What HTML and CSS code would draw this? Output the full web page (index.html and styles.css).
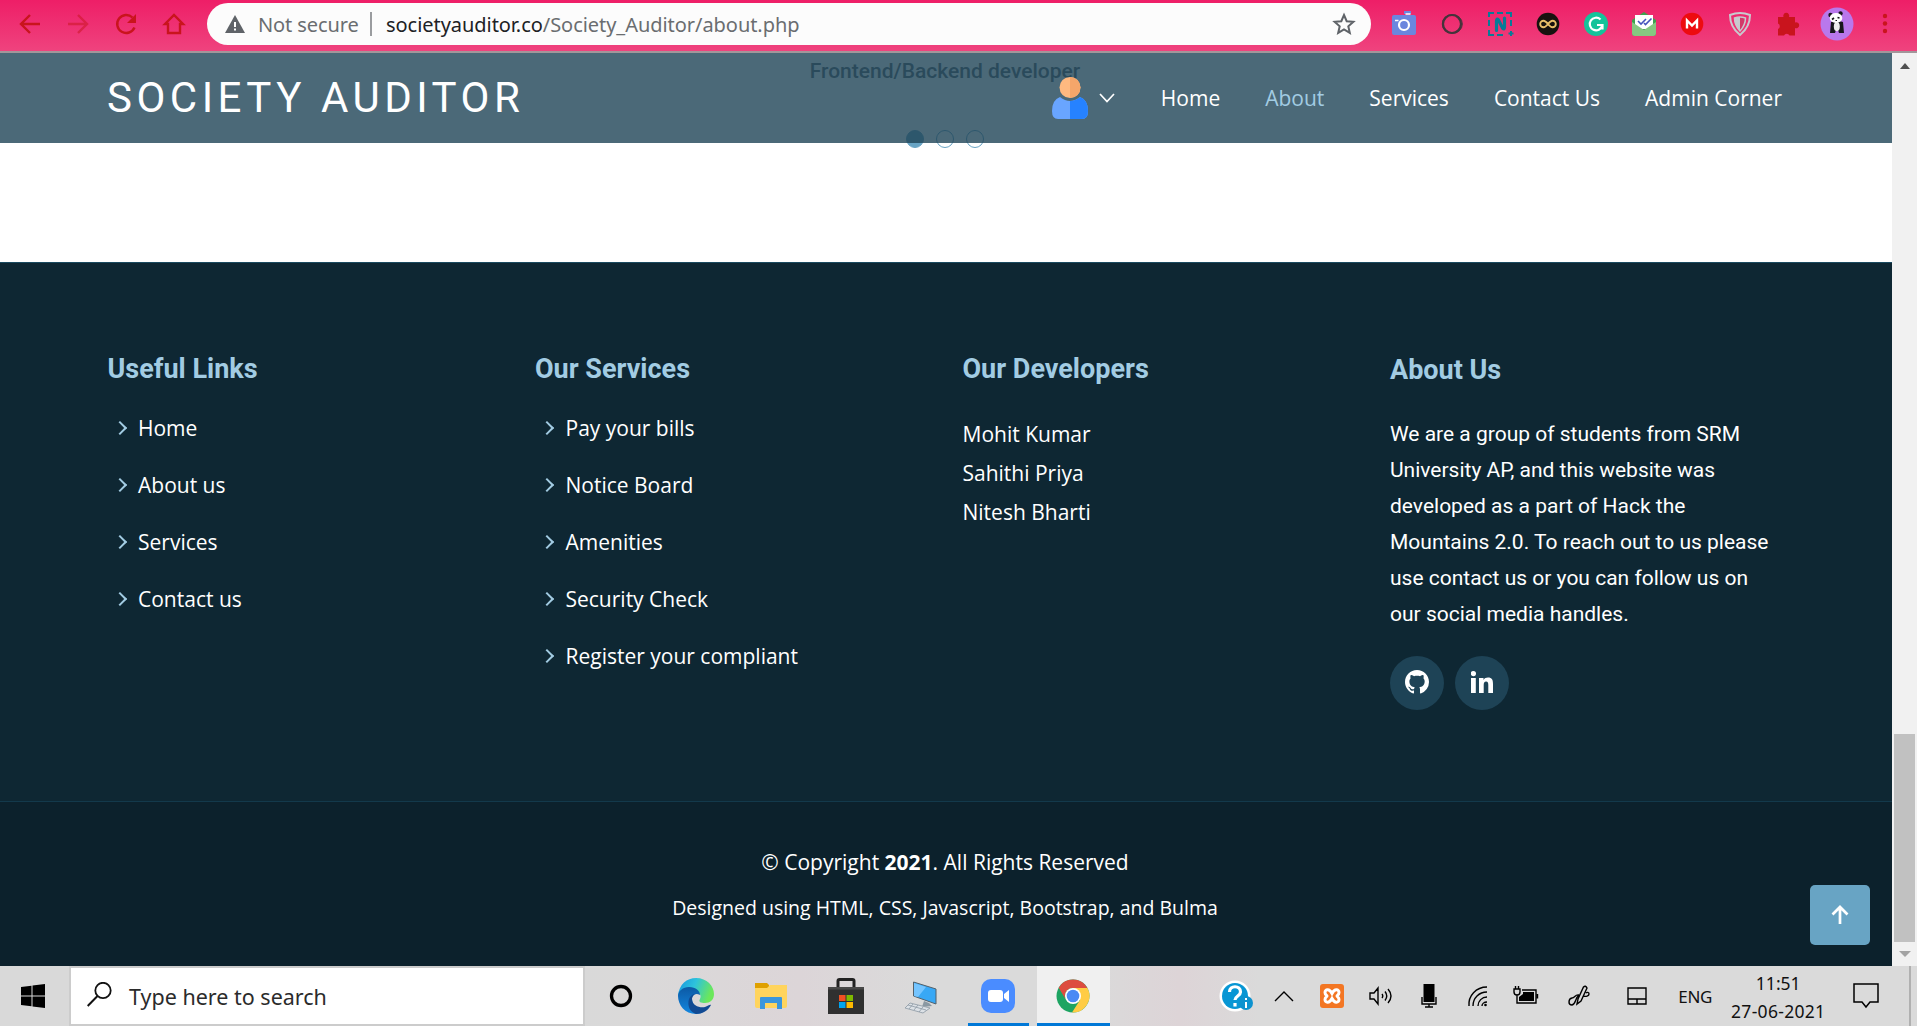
FILE: index.html
```html
<!DOCTYPE html>
<html lang="en">
<head>
<meta charset="utf-8">
<title>Society Auditor - About</title>
<link rel="stylesheet" href="styles.css">
</head>
<body>
<div class="toolbar">
  <div class="nav-buttons">
    <svg width="24" height="24" viewBox="0 0 24 24"><path d="M22 12H4M12 3L3 12l9 9"/></svg>
    <svg class="dim" width="24" height="24" viewBox="0 0 24 24"><path d="M2 12h18M12 3l9 9-9 9"/></svg>
    <svg width="24" height="24" viewBox="0 0 24 24"><path d="M20.500 15.500A9 9 0 1 1 18.500 5.500"/><path class="fill" d="M22 2v9h-9z"/></svg>
    <svg width="24" height="24" viewBox="0 0 24 24"><path d="M3 12L12 3l9 9h-3v9H6v-9z"/></svg>
  </div>
  <div class="address">
    <svg width="20" height="18" viewBox="0 0 20 18"><path fill="#5f6368" d="M10 0l10 18H0z"/><path stroke="#fff" stroke-width="2" d="M10 7v5M10 13.500v2"/></svg>
    <span class="insecure">Not secure</span>
    <i class="sep"></i>
    <span class="url"><b>societyauditor.co</b>/Society_Auditor/about.php</span>
    <svg class="star" width="24" height="24" viewBox="0 0 24 24"><path fill="none" stroke="#5f6368" stroke-width="2" d="M12 3l2.700 6.200 6.700.6-5.100 4.500 1.500 6.600L12 17.400l-5.800 3.500 1.500-6.600-5.100-4.500 6.700-.6z"/></svg>
  </div>
  <div class="extensions">
    <svg viewBox="0 0 28 34"><rect x="2" y="9" width="24" height="20" rx="2" transform="translate(0 -1)" fill="#6b86de"/><path d="M14 4h7v3h-7z" fill="#6b86de"/><path d="M15.500 7h5" stroke="#fff" stroke-width="1.500"/><circle cx="14" cy="18" r="5" fill="none" stroke="#fff" stroke-width="2.200"/><path d="M5 13.500h3.500" stroke="#fff" stroke-width="1.500"/></svg>
    <svg viewBox="0 0 28 34"><circle cx="14" cy="17" r="9" fill="none" stroke="#44333b" stroke-width="2.200"/><ellipse cx="14.300" cy="17" rx="10" ry="9.500" fill="none" stroke="#44333b"/></svg>
    <svg viewBox="0 0 28 34"><path d="M3 10V6h5m3 0h6m3 0h5v4M3 13v6m0 4v5h5m3 0h6M25 13v6m-2.500 7.500h5M25 24v5" fill="none" stroke="#087b97" stroke-width="2"/><path d="M10.500 23.500V14q0-3 2-1l4 8q2 2 2-1v-9" fill="none" stroke="#087b97" stroke-width="3.200" stroke-linecap="round" stroke-linejoin="round"/></svg>
    <svg viewBox="0 0 28 34"><circle cx="14" cy="17" r="11.300" fill="#17120f"/><path d="M14 17c-2-2.500-3-3.300-4.500-3.300a3.300 3.300 0 0 0 0 6.600c1.500 0 2.500-.8 4.500-3.300s3-3.300 4.500-3.300a3.300 3.300 0 0 1 0 6.600c-1.500 0-2.500-.8-4.500-3.300z" fill="none" stroke="#e9bf69" stroke-width="1.900"/></svg>
    <svg viewBox="0 0 28 34"><circle cx="14" cy="17" r="12" fill="#15c39a"/><path d="M18.500 12.500a6.300 6.300 0 1 0 1.700 6M15 18h5.500v4.500" fill="none" stroke="#fff" stroke-width="2.200"/></svg>
    <svg viewBox="0 0 28 34"><path d="M2 13L14 5l12 8v13a3 3 0 0 1-3 3H5a3 3 0 0 1-3-3z" fill="#3ea14d"/><path d="M5 8h18v14H5z" fill="#fff"/><path d="M2 15l12 8 12-8v11a3 3 0 0 1-3 3H5a3 3 0 0 1-3-3z" fill="#86c781"/><path d="M8 14l3 3 5-5M14 16l1.500 1.500 6-6" fill="none" stroke="#4554bd" stroke-width="1.600"/></svg>
    <svg viewBox="0 0 28 34"><circle cx="14" cy="17" r="11.300" fill="#ed0b10"/><path d="M9 21.500v-8l5 5 5-5v8" fill="none" stroke="#fff" stroke-width="2.400"/></svg>
    <svg viewBox="0 0 28 34"><path d="M4 8q10-4 20 0 0 12-10 20Q4 20 4 8z" fill="none" stroke="#c9c9ce" stroke-width="2"/><path d="M8.500 11q5.500-2 11 0 0 7-5.500 13-5.500-6-5.500-13z" fill="#d23a69" stroke="#c9c9ce" stroke-width="1.500"/><path d="M8.500 11q3-1 5.500-1v14q-5.500-6-5.500-13z" fill="#c9c9ce"/></svg>
    <svg viewBox="0 0 28 34"><path fill="#c9141d" d="M4 10h5.500a3 3 0 1 1 5.500 0h6v5.500a3 3 0 1 1 0 5.500v7.500h-5.500a3 3 0 0 0-5.500 0H4V22a3 3 0 0 0 0-5.500z"/></svg>
    <svg viewBox="0 0 34 34" class="avatar"><circle cx="17" cy="17" r="16.500" fill="#b978ec"/><path d="M11 15q6-2 12 0l1 11h-5l-1-3h-2l-1 3h-5z" fill="#17171d"/><ellipse cx="16.800" cy="19.500" rx="3" ry="4.500" fill="#eee"/><circle cx="10.500" cy="8" r="2.200" fill="#17171d"/><circle cx="20.500" cy="6.500" r="2.200" fill="#17171d"/><ellipse cx="16" cy="11" rx="6.300" ry="5" fill="#fff"/><path d="M12 12.500l2-1.500m3.500-.5l2 .5" stroke="#17171d" stroke-width="1.600"/><path d="M15.500 13.500h1.500" stroke="#17171d"/></svg>
    <svg viewBox="0 0 28 34"><g fill="#c9141d"><circle cx="14" cy="16" r="2.200"/><circle cx="14" cy="23.500" r="2.200"/><circle cx="14" cy="31" r="2.200"/></g></svg>
  </div>
</div>

<div class="viewport">
  <div class="page">
    <section class="team">
      <h4 class="role">Frontend/Backend developer</h4>
      <div class="dots"><i class="on"></i><i></i><i></i></div>
    </section>
    <header class="site-header">
      <h1>SOCIETY AUDITOR</h1>
      <nav>
        <a class="user">
          <svg width="36" height="42" viewBox="0 0 36 42"><ellipse cx="18" cy="10.500" rx="10.500" ry="10.500" fill="#ffb980"/><path d="M18 0a10.500 10.500 0 0 1 0 21z" fill="#f5a66a"/><path d="M8 20q10 8 20 0 8 3 8 14 0 8-6 8H6q-6 0-6-8Q0 23 8 20z" fill="#69a5ff"/><path d="M18 24q5.500 0 10-4 8 3 8 14 0 8-6 8H18z" fill="#2682ff"/></svg>
          <svg width="16" height="10" viewBox="0 0 16 10"><path d="M1 1l7 7.500L15 1" fill="none" stroke="#fff" stroke-width="1.700"/></svg>
        </a>
        <a>Home</a><a class="active">About</a><a>Services</a><a>Contact Us</a><a>Admin Corner</a>
      </nav>
    </header>
    <footer>
      <div class="columns">
        <div>
          <h3>Useful Links</h3>
          <ul><li>Home</li><li>About us</li><li>Services</li><li>Contact us</li></ul>
        </div>
        <div>
          <h3>Our Services</h3>
          <ul><li>Pay your bills</li><li>Notice Board</li><li>Amenities</li><li>Security Check</li><li>Register your compliant</li></ul>
        </div>
        <div>
          <h3>Our Developers</h3>
          <p class="people">Mohit Kumar<br>Sahithi Priya<br>Nitesh Bharti</p>
        </div>
        <div class="about">
          <h3>About Us</h3>
          <p>We are a group of students from SRM<br>University AP, and this website was<br>developed as a part of Hack the<br>Mountains 2.0. To reach out to us please<br>use contact us or you can follow us on<br>our social media handles.</p>
          <div class="social">
            <a><svg width="24" height="24" viewBox="0 0 16 16"><path fill="#fff" d="M8 0C3.580 0 0 3.580 0 8c0 3.540 2.290 6.530 5.470 7.590.4.070.55-.17.55-.38 0-.19-.01-.82-.01-1.490-2.010.37-2.530-.49-2.690-.94-.09-.23-.48-.94-.82-1.130-.28-.15-.68-.52-.01-.53.63-.01 1.080.58 1.230.82.720 1.210 1.870.87 2.330.66.070-.52.280-.87.510-1.070-1.780-.2-3.640-.89-3.640-3.950 0-.87.310-1.590.820-2.150-.08-.2-.36-1.020.080-2.120 0 0 .67-.21 2.200.82.640-.18 1.320-.27 2-.27s1.360.090 2 .27c1.530-1.040 2.200-.82 2.200-.82.440 1.100.160 1.920.080 2.120.51.560.820 1.270.820 2.150 0 3.070-1.870 3.750-3.650 3.950.290.250.540.730.540 1.480 0 1.070-.01 1.930-.01 2.200 0 .21.150.46.550.38A8.010 8.010 0 0 0 16 8c0-4.420-3.580-8-8-8z"/></svg></a>
            <a><svg width="22" height="22" viewBox="0 0 22 22"><path fill="#fff" d="M0 7h4.800v15H0z"/><circle cx="2.400" cy="2.600" r="2.600" fill="#fff"/><path fill="#fff" d="M8 7h4.500v2c1-1.600 2.500-2.400 4.500-2.400 4 0 5 2.400 5 6.400v9h-4.700v-8c0-2-.4-3.400-2.200-3.400S12.700 12 12.700 14v8H8z"/></svg></a>
          </div>
        </div>
      </div>
      <div class="legal">
        <p class="copy">© Copyright <strong>2021</strong>. All Rights Reserved</p>
        <p class="credit">Designed using HTML, CSS, Javascript, Bootstrap, and Bulma</p>
      </div>
    </footer>
    <a class="to-top"><svg width="18" height="20" viewBox="0 0 18 20"><path d="M9 19V2M1.500 9.500L9 2l7.500 7.500" fill="none" stroke="#fff" stroke-width="2.700"/></svg></a>
  </div>
  <div class="scrollbar">
    <svg width="10" height="6" viewBox="0 0 10 6"><path d="M0 6l5-6 5 6z" fill="#505050"/></svg>
    <i class="thumb"></i>
    <svg width="12" height="6" viewBox="0 0 12 6"><path d="M0 0l6 6 6-6z" fill="#a3a3a3"/></svg>
  </div>
</div>

<div class="taskbar">
  <div class="start"><svg width="24" height="24" viewBox="0 0 24 24"><path d="M0 3l10.500-1.300v9.800H0zM11.500 1.500L24 0v11.500H11.500zM0 12.500h10.500v9.800L0 21zM11.500 12.500H24V24l-12.500-1.500z"/></svg></div>
  <div class="search">
    <svg width="25" height="25" viewBox="0 0 25 25"><circle cx="16" cy="8.500" r="7.700" fill="none" stroke="#111" stroke-width="1.800"/><path d="M10.500 14L.7 24" stroke="#111" stroke-width="2"/></svg>
    <span>Type here to search</span>
  </div>
  <div class="apps">
    <div><svg width="36" height="36" viewBox="0 0 36 36"><circle cx="18" cy="18" r="9.500" fill="none" stroke="#000" stroke-width="3.300"/></svg></div>
    <div><svg width="36" height="36" viewBox="0 0 36 36"><defs><linearGradient id="ea" x1="0" y1="0" x2="1" y2=".3"><stop offset="0" stop-color="#1594df"/><stop offset=".5" stop-color="#2ec3dc"/><stop offset="1" stop-color="#6be75b"/></linearGradient><linearGradient id="eb" x1="0" y1="0" x2="0" y2="1"><stop offset="0" stop-color="#0c59a4"/><stop offset="1" stop-color="#1387e0"/></linearGradient></defs><path fill="url(#ea)" d="M0 18C1 6 9 0 18 0c11 0 18 8 18 16 0 6-4 9-9 9-4 0-7-1-5-4 2-4-1-7-5-7z"/><path fill="url(#eb)" d="M0 18c0-5 5-9 11-9 7 0 11 4 11 8-5-3-8 1-8 4 0 7 7 10 13 11-3 3-6 4-9 4C7 36 0 27 0 18z"/><path fill="#114a93" d="M14 21c0 7 8 9 13 8 3-1 5-3 6-2-3 6-9 9-15 9-6-2-9-8-7-15 1-3 4-5 6-5-2 1-3 3-3 5z"/></svg></div>
    <div><svg width="36" height="36" viewBox="0 0 36 36"><path fill="#dfa000" d="M2 5h12l2 2v5H2z"/><path fill="#ffd45d" d="M2 10h12l3-3h17v21q0 2-2 2H4q-2 0-2-2z"/><path fill="#3b96dc" d="M7 31V20q0-1 1-1h20q1 0 1 1v11h-5v-6H12v6z"/></svg></div>
    <div><svg width="36" height="36" viewBox="0 0 36 36"><path d="M10 12V3q0-1.500 1.500-1.500h13Q26 1.500 26 3v9" fill="none" stroke="#222" stroke-width="3"/><path fill="#303030" d="M0 9h36v27H0z"/><path fill="#484848" d="M0 9h36v2.500H0z"/><path fill="#f25022" d="M11 17h6.500v6H11z"/><path fill="#7fba00" d="M18.500 17H25v6h-6.500z"/><path fill="#00a4ef" d="M11 24h6.500v6H11z"/><path fill="#ffb900" d="M18.500 24H25v6h-6.500z"/></svg></div>
    <div><svg width="36" height="36" viewBox="0 0 36 36"><path fill="#38a8f5" stroke="#53616b" stroke-width="1" d="M10.500 4L33 11v15l-22.500-8z"/><path fill="#75c5ff" d="M11 5l12 4-8 10-4-1z"/><path fill="#8a98a2" d="M21 23l5 2 3 3-10 1z"/><path fill="#dce1e6" stroke="#8b98a3" stroke-width=".8" d="M7 25l20 5-7 5L2 30z"/><path stroke="#8b98a3" stroke-width=".8" d="M5 27l18 5M10 26l-4 5M15 27l-4 5M20 29l-4 5"/></svg></div>
    <div class="running"><svg width="36" height="36" viewBox="0 0 36 36"><rect x="1" y="1" width="34" height="34" rx="10" fill="#4a8cff"/><rect x="8" y="12" width="15" height="12" rx="3" fill="#fff"/><path fill="#fff" d="M24 16l5-4v12l-5-4z"/></svg></div>
    <div class="running current"><svg width="36" height="36" viewBox="0 0 36 36"><circle cx="18" cy="18" r="16.500" fill="#1da462"/><path fill="#fc4" d="M18 10h14.400A16.500 16.500 0 0 1 17 34.500L25 22z"/><path fill="#dd4c3f" d="M3.700 9.800A16.500 16.500 0 0 1 32.400 10H18a8 8 0 0 0-7 12z"/><circle cx="18" cy="18" r="8" fill="#fff"/><circle cx="18" cy="18" r="6.300" fill="#4a8af4"/></svg></div>
  </div>
  <div class="tray">
    <div><svg width="34" height="34" viewBox="0 0 34 34"><circle cx="16" cy="17" r="15.500" fill="#fff"/><circle cx="16" cy="17" r="13" fill="#0796d4"/><path d="M10.500 13c0-7 11-7 11 0 0 4-5.500 4-5.500 8M16 24v3.500"/><circle cx="27" cy="24" r="7" fill="#0d92cf"/><path d="M27 19v2m0 2v6"/></svg></div>
    <div><svg width="20" height="12" viewBox="0 0 20 12"><path d="M1 11l9-9 9 9"/></svg></div>
    <div><svg width="24" height="24" viewBox="0 0 24 24"><rect width="24" height="24" rx="3" fill="#f37623"/><path class="knot" d="M12 9.500C9.500 4.500 5 5 5 8.500 5 11 7 11 7 12s-2 1-2 3.500c0 3.500 4.500 4 7-1 2.500 5 7 4.500 7 1 0-2.500-2-2.500-2-3.500s2-1 2-3.500c0-3.500-4.500-4-7 1z"/></svg></div>
    <div><svg width="24" height="22" viewBox="0 0 24 22"><path d="M1 8h4l4-5v16l-4-5H1zM13 9q1.500 2 0 4M16 6.500q3.500 4.500 0 9M19 4q6 7 0 14"/></svg></div>
    <div><svg width="16" height="24" viewBox="0 0 16 24"><path class="solid" d="M2.500 0h11v18h-11z"/><path d="M1 13v7h14v-7M8 20v3M4 23h8"/></svg></div>
    <div><svg width="22" height="22" viewBox="0 0 22 22"><path d="M2 21C1 11 9 2 20 2M6 21C6 13 12 7 20 7M11 21c0-5 4-9 9-9M15 21c0-2 2-4 5-4"/><circle cx="18.500" cy="20" r="1.300"/></svg></div>
    <div><svg width="26" height="22" viewBox="0 0 26 22"><path d="M9 5h14v13H4v-7M24.500 9v4.500M1 4h6v3q0 3-3 3T1 7zM2.500 1v3M5.500 1v3M4 10v3"/><path class="solid" d="M10 7h11v9H6v-4l4-3z"/></svg></div>
    <div class="wide"><svg width="24" height="24" viewBox="0 0 24 24"><path d="M10 20l1-5 5.500-12q2-2 3.500 1l-6 13zM12 11c-4-1-4 3-7 3-4 1-4 7 0 7 4-1 3-7 7-10M16 12c3 1 6 0 6-2s-2-2-3-1"/></svg></div>
    <div class="wide"><svg width="20" height="18" viewBox="0 0 20 18"><path d="M1 1h18v16H1zM1 12h18M10 12v5"/></svg></div>
  </div>
  <span class="lang">ENG</span>
  <div class="clock"><span>11:51</span><span>27-06-2021</span></div>
  <svg class="notice" width="26" height="26" viewBox="0 0 26 26"><path d="M1 1h24v18h-8l-4 5-4-5H1z" fill="none" stroke="#000" stroke-width="1.500"/></svg>
  <i class="peek"></i>
</div>
</body>
</html>
```
FILE: styles.css
```css
* { box-sizing: border-box; }
body { margin: 0; width: 1917px; height: 1026px; overflow: hidden; font-family: "Open Sans", "Noto Sans", sans-serif; color: #fff; }
h1, h3, h4, p, ul { margin: 0; padding: 0; }
ul { list-style: none; }
svg { display: block; flex: none; }

/* browser toolbar */
.toolbar { height: 53px; display: flex; align-items: flex-start; background: linear-gradient(#ee1e67, #ef437e); border-bottom: 2px solid #a2969a; }
.nav-buttons { width: 207px; height: 48px; padding-left: 18px; display: flex; align-items: center; gap: 24px; }
.nav-buttons path { fill: none; stroke: #c9141d; stroke-width: 2.400; }
.nav-buttons .fill { fill: #c9141d; stroke: none; }
.nav-buttons .dim { opacity: .5; }
.address { width: 1164px; height: 42px; margin-top: 3px; padding: 0 15px 0 18px; display: flex; align-items: center; background: #fcfcfc; border-radius: 21px; color: #6a6d70; font-family: "Noto Sans", sans-serif; font-size: 20px; white-space: nowrap; }
.insecure { width: 101px; margin-left: 13px; letter-spacing: -.1px; }
.sep { width: 2px; height: 24px; margin: 0 14px 0 11px; background: #9a9c9f; }
.url { letter-spacing: -.05px; }
.url b { font-weight: 400; color: #202124; }
.star { margin-left: auto; }
.extensions { height: 48px; padding-left: 9px; display: flex; align-items: center; }
.extensions svg { width: 28px; height: 34px; margin: 0 10px; overflow: visible; }
.extensions .avatar { width: 34px; margin: 0 7px 0 8px; }
.extensions svg:last-child { margin-top: -14px; }

/* page */
.viewport { height: 913px; display: flex; }
.page { position: relative; width: 1892px; background: #fff; }
.team { height: 209px; padding-right: 2px; display: flex; flex-direction: column; align-items: center; }
.role { height: 76px; padding-top: 5px; font: 500 21px/26px Roboto, sans-serif; color: #5a6570; }
.dots { display: flex; gap: 12px; margin-top: 1px; }
.dots i { width: 18px; height: 18px; border: 1px solid #68a4c4; border-radius: 50%; }
.dots .on { background: #68a4c4; }
.site-header { position: absolute; top: 0; left: 0; width: 1892px; height: 90px; padding: 0 110px 0 107px; display: flex; align-items: center; justify-content: space-between; background: rgba(30, 67, 86, .8); }
.site-header h1 { font: 400 42px/50px Roboto, sans-serif; letter-spacing: 4.500px; }
nav { display: flex; align-items: center; gap: 45px; font-size: 21px; line-height: 30px; white-space: nowrap; }
.active { color: #a2cce3; }
.user { display: flex; align-items: center; gap: 11px; margin-right: 1px; }

footer { height: 704px; background: #0e2733; border-top: 1px solid #1a4a60; }
.columns { height: 538px; padding: 90px 75px 0 107.500px; display: grid; grid-template-columns: repeat(4, 427.500px); }
h3 { font: 700 27px/32px Roboto, sans-serif; color: #a2cce3; }
.columns ul { padding: 14px 0 0 9px; }
.columns li { height: 57px; display: flex; align-items: center; gap: 12px; font-size: 21px; white-space: nowrap; }
.columns li::before { content: ""; width: 8px; height: 8px; margin: 0 1.500px 0 -2px; border: solid #a2cce3; border-width: 2.500px 2.500px 0 0; transform: rotate(45deg); }
.people { padding-top: 30px; font-size: 21px; line-height: 39px; }
.about { padding-top: 1px; }
.about p { padding-top: 30px; font: 400 21px/36px Roboto, sans-serif; white-space: nowrap; }
.social { display: flex; gap: 11px; margin-top: 24px; }
.social a { width: 54px; height: 54px; padding-bottom: 2px; display: flex; align-items: center; justify-content: center; border-radius: 50%; background: #1e4356; }
.legal { height: 165px; padding: 43px 2px 0 0; border-top: 1px solid #13394b; background: #0c212c; text-align: center; }
.legal p { white-space: nowrap; }
.copy { font-size: 21px; line-height: 34px; }
.credit { margin-top: 12px; font-size: 19.500px; line-height: 34px; }
.to-top { position: absolute; right: 22px; bottom: 21px; width: 60px; height: 60px; display: flex; align-items: center; justify-content: center; border-radius: 5px; background: #68a4c4; }
.scrollbar { width: 25px; padding: 10px 0 9px; display: flex; flex-direction: column; align-items: center; background: #f1f1f1; }
.thumb { width: 21px; height: 208px; margin: auto 0 9px; background: #c1c1c1; }

/* taskbar */
.taskbar { height: 60px; display: flex; align-items: stretch; color: #111; background: linear-gradient(90deg, #d9d9d9 0 580px, #dad9d9 640px, #dcd5d8 800px, #dadada 920px, #dadada 1090px, #ddd4d7 1180px, #dadada 1260px); font-family: "Noto Sans", sans-serif; }
.start { width: 69px; padding: 18px 0 0 21px; }
.search { width: 516px; height: 60px; padding-left: 16px; display: flex; align-items: center; gap: 17px; background: #fff; border: 2px solid #ccc; color: #2b2b2b; font-size: 21.500px; }
.search svg { margin-top: -3px; }
.search span { padding-top: 1px; white-space: nowrap; }
.apps { display: flex; margin-left: -1.500px; }
.apps div { width: 75px; padding-top: 12px; display: flex; justify-content: center; border: 0 solid transparent; }
.apps .running { width: 61px; margin: 0 8px 0 9px; padding-right: 1px; border-bottom: 3px solid #0078d7; }
.apps .current { width: 73px; margin: 0; background: #f0f0f0; }
.tray { display: flex; margin-left: 102px; }
.tray div { width: 48.400px; display: flex; align-items: center; justify-content: center; }
.tray .wide { width: 58px; }
.tray path { stroke: #000; stroke-width: 1.400; fill: none; }
.tray path.solid { fill: #000; stroke: none; }
.tray path.knot { stroke: #fff; stroke-width: 3; }
.tray div:first-child path { stroke: #fff; stroke-width: 3.200; }
.tray div:first-child path:last-child { stroke-width: 2; }
.lang { width: 34px; margin-left: 12px; font-size: 17px; line-height: 62px; letter-spacing: -.3px; }
.clock { width: 94px; margin-left: 19px; display: flex; flex-direction: column; align-items: center; font-size: 17.500px; line-height: 28px; padding-top: 3px; white-space: nowrap; }
.clock span:last-child { letter-spacing: .3px; }
.notice { margin: 17px 0 0 28px; }
.peek { width: 2px; margin-left: auto; margin-right: 6px; background: #b0b0b0; }
```
